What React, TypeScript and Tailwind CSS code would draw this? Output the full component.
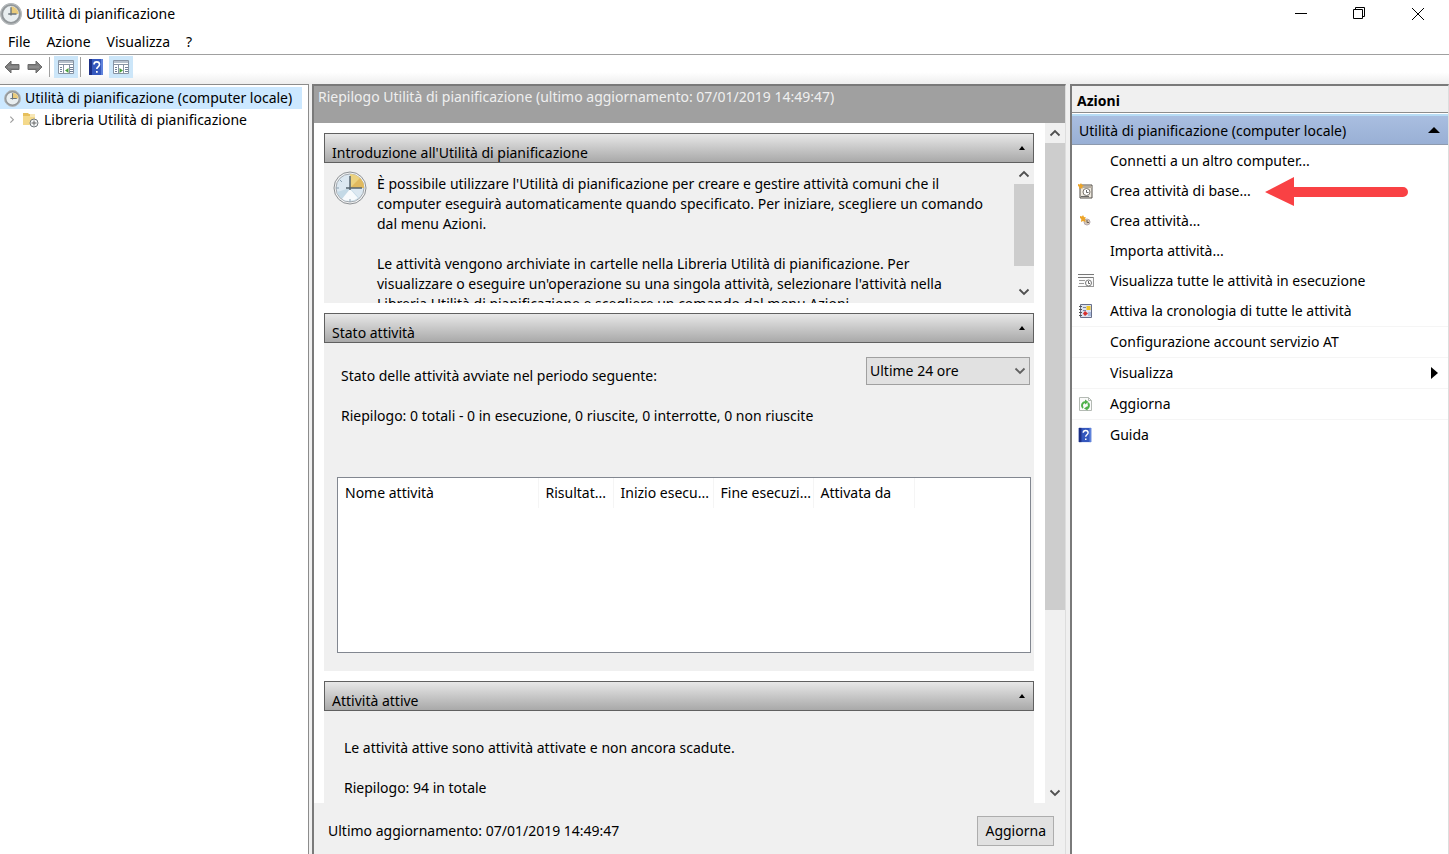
import type { ReactNode } from 'react'

type ActionItem = {
  label: string
  icon?: ReactNode
  divider?: boolean
  submenu?: boolean
  highlighted?: boolean
}

function ClockIcon({ className }: { className: string }) {
  return (
    <svg viewBox="0 0 32 32" className={className} aria-hidden="true">
      <circle cx="16" cy="16" r="13.500" fill="#e9eef0" stroke="#92979a" strokeWidth="4" />
      <circle cx="16" cy="16" r="15" fill="none" stroke="#b9bdbf" strokeWidth="1.500" />
      <path d="M16 16V5a11 11 0 0 1 11 11z" fill="#e9cb7c" />
      <path d="M16 6v12M12 16h12" fill="none" stroke="#6b747a" strokeWidth="2" />
    </svg>
  )
}

function LargeClockIcon() {
  return (
    <svg viewBox="0 0 34 34" className="size-[34px] shrink-0" aria-hidden="true">
      <circle cx="17" cy="17" r="16" fill="#f2f3f4" stroke="#8c9093" />
      <circle cx="17" cy="17" r="14" fill="#dce8f1" stroke="#a3a9ae" />
      <path d="M4 21a14 14 0 0 0 22 6L17 17z" fill="#c3d9e6" />
      <path d="M9 28a14 14 0 0 0 16-1l-8-9z" fill="#f7fafc" />
      <path d="M17 17V3a14 14 0 0 1 14 14z" fill="#ecd27f" />
      <path d="M17 17l10-10a14 14 0 0 1 4 10z" fill="#e0b95f" />
      <path d="M17 5v14M13 17h16" stroke="#56646f" strokeWidth="1.5" />
      <path d="M7 9l2 2M3 17h3M17 28v3" stroke="#8ba0b0" />
    </svg>
  )
}

function ToolbarArrow({ flip }: { flip?: boolean }) {
  return (
    <svg viewBox="0 0 16 14" className={`h-[14px] w-4 ${flip ? '-scale-x-100' : ''}`} aria-hidden="true">
      <path d="M1 7l6-6v3.500h8v5H7V13z" fill="#7e7e7e" stroke="#6a6a6a" strokeLinejoin="round" />
      <path d="M4 7h10" stroke="#999" />
    </svg>
  )
}

function HelpIcon({ className }: { className: string }) {
  return (
    <svg viewBox="0 0 14 18" className={className} aria-hidden="true">
      <path d="M0 1h14v16H0z" fill="#3457bd" />
      <path d="M0 1h3v16H0z" fill="#1c2f86" />
      <path d="M12 1h2v16h-2z" fill="#5f83dc" />
      <path d="M5 6.500C5 3 10.500 3 10.500 6.500c0 2.300-2.700 2.300-2.700 4.500" fill="none" stroke="#fff" strokeWidth="1.600" />
      <path d="M7 13h1.700v1.700H7z" fill="#fff" />
    </svg>
  )
}

function PaneIcon({ right }: { right?: boolean }) {
  return (
    <svg viewBox="0 0 18 16" className="h-4 w-[18px]" aria-hidden="true">
      <path d="M1.500 1.500h15v13h-15z" fill="#fff" stroke="#8793a3" />
      <path d="M2 2h14v2H2z" fill="#b6c0cc" />
      <path d="M2 5.500h14" stroke="#8793a3" />
      <path d={right ? 'M6.500 6v8M11.500 6v8' : 'M6.500 6v8M12.500 6v8'} stroke="#8793a3" />
      <path d="M3 8.500h2M3 10.500h2M3 12.500h2M13 8.500h3M13 10.500h3M13 12.500h3" stroke="#6f7f98" />
      <path d={right ? 'M7.500 9v5l3.500-2.500z' : 'M11.500 9v5L8 11.500z'} fill="#49a03b" />
    </svg>
  )
}

function FolderClockIcon() {
  return (
    <svg viewBox="0 0 17 16" className="h-4 w-[17px]" aria-hidden="true">
      <path d="M1 1h5l1 1h6v11H1z" fill="#e6bf5c" />
      <path d="M1 4h12v9H1z" fill="#f4d98b" />
      <path d="M8 2h5v3H8z" fill="#f7e7b7" />
      <circle cx="12" cy="11" r="4" fill="#f4f6f7" stroke="#70777c" />
      <path d="M12 8.500v5M9.500 11h5" fill="none" stroke="#666" />
    </svg>
  )
}

function BasicTaskIcon() {
  return (
    <svg viewBox="0 0 16 16" className="size-4" aria-hidden="true">
      <path d="M2 2h12v13H2z" fill="#eee9df" stroke="#55504b" />
      <path d="M3 3h11v2H3z" fill="#b5ada0" />
      <circle cx="8.500" cy="9" r="3.500" fill="#fff" stroke="#7a746c" />
      <path d="M8.500 7v2.500h2M3 13.500h8" fill="none" stroke="#666" />
      <path d="M0 1l2 .5L3 0l1 2 2 .5L4 4l.5 2-2-1L1 6l.3-2L0 3z" fill="#eda427" />
    </svg>
  )
}

function TaskIcon() {
  return (
    <svg viewBox="0 0 16 16" className="size-4" aria-hidden="true">
      <circle cx="9" cy="9" r="3" fill="#d9c9b4" stroke="#b5aab0" />
      <path d="M9 7v2.500h2" fill="none" stroke="#6d5c50" />
      <path d="M2 3l2 .5L5 2l1 2 2 .500-1 1.500.5 3-2.500-1L3 9l.3-3L2 5z" fill="#eda427" />
    </svg>
  )
}

function RunningTasksIcon() {
  return (
    <svg viewBox="0 0 17 16" className="h-4 w-[17px]" aria-hidden="true">
      <path d="M1 1h15v13H1z" fill="#fafafa" />
      <path d="M0 1.500h16M0 4.500h16" stroke="#777" />
      <path d="M1 7.500h6M1 10.500h5M0 13.500h16M15.500 4v10" stroke="#999" />
      <circle cx="10.500" cy="10" r="3" fill="#fff" stroke="#777" />
      <path d="M10.500 8v2.500H12" fill="none" stroke="#666" />
    </svg>
  )
}

function HistoryIcon() {
  return (
    <svg viewBox="0 0 16 16" className="size-4" aria-hidden="true">
      <path d="M2.500 1.500h11v13h-11z" fill="#dce2ef" stroke="#68708a" />
      <path d="M1 3.500h3M1 6.500h3M1 9.500h3M1 12.500h3" stroke="#555" />
      <path d="M5 4.500h3M5 7.500h3" stroke="#7b84a0" />
      <path d="M8.500 3h4v4h-4z" fill="#efc529" />
      <path d="M7 8l3 2.500L7 13l-2-2.500z" fill="#d6302e" />
      <path d="M10 9h3v4h-3z" fill="#a9b9dc" />
    </svg>
  )
}

function RefreshIcon() {
  return (
    <svg viewBox="0 0 16 16" className="size-4" aria-hidden="true">
      <path d="M1.500 1.500h9l3 3v10h-12z" fill="#fafafa" stroke="#b4bab4" />
      <path d="M10.500 1.500v3h3" fill="none" stroke="#b4bab4" />
      <path d="M5 12a3.500 3.500 0 0 1 2.500-6M10 7a3.500 3.500 0 0 1-1 5.500" fill="none" stroke="#4fb04a" strokeWidth="2" />
      <path d="M7 3.500L10.500 6 7 8.500zM9.500 10L6 12.500l3.500 2z" fill="#4fb04a" />
    </svg>
  )
}

function Chevron({ className }: { className: string }) {
  return (
    <svg viewBox="0 0 12 8" className={className} aria-hidden="true">
      <path d="M1.500 6.500L6 2l4.500 4.500" fill="none" stroke="currentColor" strokeWidth="1.800" />
    </svg>
  )
}

function SectionHeader({ title }: { title: string }) {
  return (
    <h2 className="flex h-[30px] shrink-0 items-center justify-between border border-[#606060] bg-linear-to-b from-[#e8e8e8] to-[#a9a9a9] pr-2 pl-[7px]">
      <span className="pt-2.5">{title}</span>
      <button type="button" aria-label={`Comprimi ${title}`}>
        <svg viewBox="0 0 6 4" className="h-1 w-1.5" aria-hidden="true">
          <path d="M0 4l3-4 3 4z" />
        </svg>
      </button>
    </h2>
  )
}

const actions: ActionItem[] = [
  { label: 'Connetti a un altro computer...' },
  { label: 'Crea attività di base...', icon: <BasicTaskIcon />, highlighted: true },
  { label: 'Crea attività...', icon: <TaskIcon /> },
  { label: 'Importa attività...' },
  { label: 'Visualizza tutte le attività in esecuzione', icon: <RunningTasksIcon /> },
  { label: 'Attiva la cronologia di tutte le attività', icon: <HistoryIcon />, divider: true },
  { label: 'Configurazione account servizio AT', divider: true },
  { label: 'Visualizza', divider: true, submenu: true },
  { label: 'Aggiorna', icon: <RefreshIcon />, divider: true },
  { label: 'Guida', icon: <HelpIcon className="h-4 w-[14px]" /> },
]

const columns = [
  { label: 'Nome attività', width: 'w-[200px]' },
  { label: 'Risultat...', width: 'w-[75px]' },
  { label: 'Inizio esecu...', width: 'w-[100px]' },
  { label: 'Fine esecuzi...', width: 'w-[100px]' },
  { label: 'Attivata da', width: 'w-[101px]' },
]

function TitleBar() {
  return (
    <header className="flex h-7 shrink-0 items-center justify-between">
      <div className="flex items-center gap-1">
        <ClockIcon className="size-[22px]" />
        <h1>Utilità di pianificazione</h1>
      </div>
      <div className="flex gap-11 pr-6">
        <button type="button" aria-label="Riduci a icona">
          <svg viewBox="0 0 14 14" className="size-[14px]" aria-hidden="true">
            <path d="M0 6.500h12" stroke="#000" />
          </svg>
        </button>
        <button type="button" aria-label="Ripristina">
          <svg viewBox="0 0 14 14" className="size-[14px]" aria-hidden="true">
            <path d="M.5 2.500h9v9h-9zM2.500 2.500v-2h9v9h-2" fill="none" stroke="#000" />
          </svg>
        </button>
        <button type="button" aria-label="Chiudi">
          <svg viewBox="0 0 14 14" className="size-[14px]" aria-hidden="true">
            <path d="M1 1l12 12M13 1L1 13" stroke="#000" />
          </svg>
        </button>
      </div>
    </header>
  )
}

function Toolbar() {
  return (
    <div className="flex h-[30px] shrink-0 items-center border-t border-[#a0a0a0] bg-linear-to-b from-white from-60% to-[#eee] px-1 pb-1.5">
      <button type="button" aria-label="Indietro">
        <ToolbarArrow />
      </button>
      <button type="button" aria-label="Avanti" className="ml-[7px]">
        <ToolbarArrow flip />
      </button>
      <span className="ml-1.5 h-5 w-px bg-[#a0a0a0]" />
      <button type="button" aria-label="Mostra albero" className="ml-1 flex h-[22px] w-6 items-center justify-center bg-[#cce6f9]">
        <PaneIcon />
      </button>
      <span className="ml-0.5 h-5 w-px bg-[#a0a0a0]" />
      <button type="button" aria-label="Guida" className="ml-2">
        <HelpIcon className="h-[18px] w-[14px]" />
      </button>
      <button type="button" aria-label="Mostra riquadro azioni" className="ml-1.5 flex h-[22px] w-6 items-center justify-center bg-[#cce6f9]">
        <PaneIcon right />
      </button>
    </div>
  )
}

function ActionsPane() {
  return (
    <aside className="w-[379px] shrink-0 border-t-2 border-r border-l-2 border-t-[#7a7a7a] border-r-[#ddd] border-l-[#7a7a7a] bg-white">
      <h2 className="flex h-[27px] items-center border-b border-[#8c8c8c] bg-[#f0f0f0] px-[5px] pt-1 font-bold">Azioni</h2>
      <div className="mt-px flex h-[31px] items-center justify-between border-t-2 border-b border-t-[#b7dcf5] border-b-[#8d9aae] bg-linear-to-b from-[#a9bee0] to-[#99b0d5] pr-2 pl-[7px]">
        <span className="pt-px">Utilità di pianificazione (computer locale)</span>
        <button type="button" aria-label="Comprimi">
          <svg viewBox="0 0 12 6" className="h-1.5 w-3" aria-hidden="true">
            <path d="M0 6l6-6 6 6z" />
          </svg>
        </button>
      </div>
      <ul className="pt-px">
        {actions.map((action) => (
          <li key={action.label} className={action.divider ? 'border-b border-[#f5f5f5]' : ''}>
            <button type="button" className="relative flex h-[30px] w-full items-center pr-2.5 pl-1.5 text-left">
              <span className="flex w-8 shrink-0">{action.icon}</span>
              <span className="grow">{action.label}</span>
              {action.submenu && (
                <svg viewBox="0 0 7 12" className="h-3 w-[7px]" aria-hidden="true">
                  <path d="M0 0l7 6-7 6z" />
                </svg>
              )}
              {action.highlighted && (
                <svg viewBox="0 0 144 30" className="absolute top-0 left-48 h-[30px] w-36" aria-hidden="true">
                  <path d="M1 16L30 1v10h109a5 5 0 0 1 0 10H30v9z" fill="#f94144" />
                </svg>
              )}
            </button>
          </li>
        ))}
      </ul>
    </aside>
  )
}

export default function App() {
  return (
    <div className="flex h-screen flex-col overflow-hidden bg-white font-['Noto_Sans','Open_Sans',sans-serif] text-[14px] leading-5 text-black">
      <TitleBar />
      <nav className="flex h-[26px] shrink-0 items-center gap-4 px-2 pt-px" aria-label="Menu">
        <button type="button">File</button>
        <button type="button">Azione</button>
        <button type="button">Visualizza</button>
        <button type="button">?</button>
      </nav>
      <Toolbar />

      <div className="flex min-h-0 grow bg-[#f0f0f0]">
        <aside className="w-[309px] shrink-0 border-t border-r border-[#8c8c8c] bg-white pt-0.5">
          <a href="#root" className="mr-1.5 flex h-[22px] items-center gap-1 bg-[#cce8ff] pl-1 whitespace-nowrap">
            <ClockIcon className="size-[17px] shrink-0" />
            Utilità di pianificazione (computer locale)
          </a>
          <a href="#library" className="flex h-[22px] items-center pl-2 whitespace-nowrap">
            <Chevron className="mr-1.5 w-2 rotate-90 text-[#a0a0a0]" />
            <FolderClockIcon />
            <span className="ml-[5px]">Libreria Utilità di pianificazione</span>
          </a>
        </aside>

        <main className="mr-1 ml-[3px] flex min-w-0 grow flex-col border-t-2 border-r border-l-2 border-t-[#7a7a7a] border-r-[#ddd] border-l-[#7a7a7a]">
          <h2 className="h-[37px] shrink-0 truncate bg-[#a0a0a0] px-1 pt-px text-[#efefef]">
            Riepilogo Utilità di pianificazione (ultimo aggiornamento: 07/01/2019 14:49:47)
          </h2>
          <div className="flex min-h-0 grow bg-white">
            <div className="flex min-w-0 grow flex-col gap-2.5 overflow-hidden pt-2.5 pr-[11px] pl-2.5">
              <section className="flex h-[170px] shrink-0 flex-col bg-[#f0f0f0]">
                <SectionHeader title="Introduzione all'Utilità di pianificazione" />
                <div className="flex min-h-0 grow">
                  <div className="flex grow gap-2.5 overflow-hidden pl-[9px]">
                    <div className="pt-2">
                      <LargeClockIcon />
                    </div>
                    <div className="w-[620px] space-y-5 pt-[11px]">
                      <p>
                        È possibile utilizzare l'Utilità di pianificazione per creare e gestire attività comuni che il
                        <br />
                        computer eseguirà automaticamente quando specificato. Per iniziare, scegliere un comando
                        <br />
                        dal menu Azioni.
                      </p>
                      <p>
                        Le attività vengono archiviate in cartelle nella Libreria Utilità di pianificazione. Per
                        <br />
                        visualizzare o eseguire un'operazione su una singola attività, selezionare l'attività nella
                        <br />
                        Libreria Utilità di pianificazione e scegliere un comando dal menu Azioni.
                      </p>
                    </div>
                  </div>
                  <div className="flex w-5 shrink-0 flex-col items-center justify-between py-[7px] text-[#505050]">
                    <Chevron className="w-3" />
                    <span className="mt-1.5 mb-auto h-[82px] w-5 bg-[#cdcdcd]" />
                    <Chevron className="w-3 rotate-180" />
                  </div>
                </div>
              </section>

              <section className="flex h-[358px] shrink-0 flex-col bg-[#f0f0f0]">
                <SectionHeader title="Stato attività" />
                <div className="flex grow flex-col pt-3.5 pr-[3px] pb-[18px] pl-[13px]">
                  <div className="flex items-start justify-between pr-px pl-1">
                    <label htmlFor="period" className="pt-[9px]">
                      Stato delle attività avviate nel periodo seguente:
                    </label>
                    <div className="relative">
                      <select id="period" className="h-7 w-[164px] appearance-none border border-[#a0a0a0] bg-[#e1e1e1] pl-[3px]">
                        <option>Ultime 24 ore</option>
                      </select>
                      <Chevron className="pointer-events-none absolute top-2.5 right-1 w-3 rotate-180 text-[#606060]" />
                    </div>
                  </div>
                  <p className="mt-5 pl-1">Riepilogo: 0 totali - 0 in esecuzione, 0 riuscite, 0 interrotte, 0 non riuscite</p>
                  <div className="mt-[51px] grow border border-[#828790] bg-white">
                    <table className="table-fixed">
                      <thead>
                        <tr>
                          {columns.map((column) => (
                            <th key={column.label} className={`${column.width} h-[30px] border-r border-[#f5f5f5] pl-[7px] text-left font-normal whitespace-nowrap`}>
                              {column.label}
                            </th>
                          ))}
                        </tr>
                      </thead>
                    </table>
                  </div>
                </div>
              </section>

              <section className="flex grow flex-col bg-[#f0f0f0]">
                <SectionHeader title="Attività attive" />
                <div className="space-y-5 pt-[27px] pl-5">
                  <p>Le attività attive sono attività attivate e non ancora scadute.</p>
                  <p>Riepilogo: 94 in totale</p>
                </div>
              </section>
            </div>
            <div className="flex w-5 shrink-0 flex-col items-center bg-[#f0f0f0] py-1.5 text-[#505050]">
              <Chevron className="w-3" />
              <div className="my-1.5 flex w-full grow flex-col">
                <span className="h-[73%] bg-[#cdcdcd]" />
              </div>
              <Chevron className="w-3 rotate-180" />
            </div>
          </div>
          <footer className="flex h-[51px] shrink-0 items-center justify-between pt-1 pr-[11px] pl-3.5">
            <span>Ultimo aggiornamento: 07/01/2019 14:49:47</span>
            <button type="button" className="h-[30px] border border-[#adadad] bg-[#e1e1e1] px-[7px]">
              Aggiorna
            </button>
          </footer>
        </main>

        <ActionsPane />
      </div>
    </div>
  )
}
